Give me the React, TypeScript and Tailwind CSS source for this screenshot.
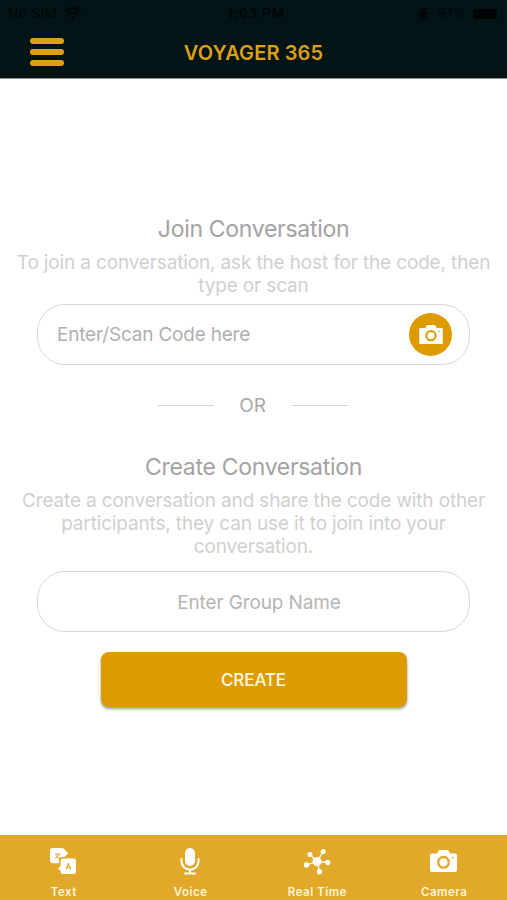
import React from 'react';

const CameraIcon: React.FC<{ className?: string; lens: string }> = ({ className, lens }) => (
  <svg viewBox="0 0 26 21" className={className}>
    <path
      fill="#fff"
      d="M1.500 3.200h5.300L8 .8Q8.400 0 9.300 0h7.400q.9 0 1.300.8l1.200 2.400h5.300A1.500 1.500 0 0 1 26 4.700v14.800a1.500 1.500 0 0 1-1.500 1.500h-23A1.500 1.500 0 0 1 0 19.500V4.700a1.500 1.500 0 0 1 1.500-1.500z"
    />
    <circle cx="13" cy="11.800" r="5.100" fill="none" stroke={lens} strokeWidth="2.300" />
    <circle cx="22" cy="7.200" r="0.9" fill={lens} />
  </svg>
);

const TranslateIcon: React.FC = () => (
  <svg viewBox="0 0 26.300 26.300" className="h-[26px] w-[26px]">
    <path fill="#fff" d="M2.500 0H12q1.500 0 2.300 1L18.500 5.500 14.500 9H11q-2 0-2 2v4.500H2.500A2.500 2.500 0 0 1 0 13V2.500A2.500 2.500 0 0 1 2.500 0z" />
    <path fill="#fff" d="M13 10.500h11a2.300 2.300 0 0 1 2.300 2.300V24a2.300 2.300 0 0 1-2.300 2.300H13a2.300 2.300 0 0 1-2.300-2.300v-1L8 21l2.700-2.500v-5.700a2.300 2.300 0 0 1 2.300-2.300z" />
    <path fill="none" stroke="#e2a829" strokeWidth="1" d="M5 6.300h5.500M7.700 5v1.300M9.500 6.500Q8.500 9.500 5.300 10.500M6 7q1 2.500 3 3.400" />
    <path fill="none" stroke="#e2a829" strokeWidth="1.200" d="M16.300 21.800l2.200-6 2.200 6M17 20h3" />
  </svg>
);

const MicIcon: React.FC = () => (
  <svg viewBox="0 0 20 27" className="h-[27px] w-5">
    <rect x="5" y="0" width="10" height="18" rx="5" fill="#fff" />
    <path
      fill="none"
      stroke="#fff"
      strokeWidth="2"
      strokeLinecap="round"
      d="M1.500 11v2.500a8.500 8.200 0 0 0 17 0V11M10 22v3.500M5 25.600h10"
    />
  </svg>
);

const HubIcon: React.FC = () => (
  <svg viewBox="0 0 28 27" className="h-[27px] w-7">
    <path stroke="#fff" strokeWidth="1.300" d="M14 13.500L7 6.500M14 13.500L20.200 3.500M14 13.500L3.500 17M14 13.500L24.500 14.500M14 13.500L16.500 23.500" />
    <g fill="#fff">
      <circle cx="14" cy="13.500" r="4.500" />
      <circle cx="7" cy="6.500" r="2.500" />
      <circle cx="20.200" cy="3.500" r="2.500" />
      <circle cx="3.500" cy="17" r="2.700" />
      <circle cx="24.700" cy="14.500" r="2.700" />
      <circle cx="16.500" cy="23.700" r="2.700" />
    </g>
  </svg>
);

const tabs = [
  { label: 'Text', icon: <TranslateIcon /> },
  { label: 'Voice', icon: <MicIcon /> },
  { label: 'Real Time', icon: <HubIcon /> },
  { label: 'Camera', icon: <CameraIcon className="h-[22px] w-[27px]" lens="#e2a829" /> },
];

const Header: React.FC = () => (
  <header className="h-[79px] shrink-0 border-b border-[#8d9294] bg-[#031417]">
    <div className="flex h-[27px] items-center justify-between pl-2 pr-[10px] text-[13px] leading-none text-[#000507]">
      <div className="flex w-40 items-center gap-[6px]">
        <span className="text-[13.500px] tracking-[0.5px]">No SIM</span>
        <svg viewBox="0 0 18 13" className="h-[13px] w-[18px]" fill="none" stroke="#000507" strokeWidth="2.400">
          <path d="M1 4.500a11.500 11.500 0 0 1 16 0M4 7.800a7.200 7.200 0 0 1 10 0" />
          <path d="M9 12.500L6.500 10a3.600 3.600 0 0 1 5 0z" fill="#000507" stroke="none" />
        </svg>
      </div>
      <span className="ml-[7px] text-[13.500px] font-semibold tracking-[0.8px]">1:03 PM</span>
      <div className="flex w-40 items-center justify-end gap-[6px]">
        <svg viewBox="0 0 16 14" className="h-[14px] w-4" fill="none" stroke="#000507" strokeWidth="1.200">
          <path d="M12 3.500A5.800 5.800 0 1 0 12.500 10M11 6.500h4.500" />
          <path d="M4.500 6.300h5V10h-5zM5.500 6V4.500a1.500 1.500 0 0 1 3 0V6" fill="#000507" />
        </svg>
        <span className="tracking-[0.5px]">97%</span>
        <span className="h-[10px] w-6 rounded-[2px] bg-[#000304]" />
      </div>
    </div>
    <div className="grid h-[50px] grid-cols-[95px_1fr_95px] items-center">
      <div className="ml-[30.400px] flex w-[33.500px] flex-col gap-[5px]">
        <span className="h-[6px] rounded-full bg-[#dda012]" />
        <span className="h-[6px] rounded-full bg-[#dda012]" />
        <span className="h-[6px] rounded-full bg-[#dda012]" />
      </div>
      <h1 className="pt-px text-center text-[20px] font-semibold leading-none tracking-[0.12px] text-[#dda012]">VOYAGER 365</h1>
    </div>
  </header>
);

export default function App() {
  return (
    <div className="flex h-[900px] w-[507px] flex-col overflow-hidden bg-white font-['Inter',sans-serif]">
      <Header />

      <main className="flex flex-1 flex-col items-center pt-[134px] text-center">
        <h2 className="text-[23px] leading-8 tracking-[-0.3px] text-[#a3a3a3]">Join Conversation</h2>
        <p className="mt-[6px] whitespace-nowrap text-[19px] leading-[23px] tracking-[-0.15px] text-[#d0d0d0]">
          To join a conversation, ask the host for the code, then
          <br />
          type or scan
        </p>
        <div className="mt-[7px] flex h-[61px] w-[433px] shrink-0 items-center justify-between rounded-[28px] border-[1.500px] border-[#d8d8d8] pl-[19px] pr-[17px]">
          <span className="pt-[2px] text-[19px] tracking-[-0.2px] text-[#b0b0b0]">Enter/Scan Code here</span>
          <span className="flex h-[43px] w-[43px] items-center justify-center rounded-full bg-[#de9b00]">
            <CameraIcon className="h-[19px] w-6" lens="#de9b00" />
          </span>
        </div>

        <div className="mr-[2px] mt-[26px] flex h-7 items-center">
          <span className="h-px w-[56px] bg-[#d4d4d4]" />
          <span className="w-[78px] pt-[2px] text-[19px] tracking-[-0.2px] text-[#a8a8a8]">OR</span>
          <span className="h-px w-[56px] bg-[#d4d4d4]" />
        </div>

        <h2 className="mt-[32px] text-[23px] leading-8 tracking-[-0.3px] text-[#a3a3a3]">Create Conversation</h2>
        <p className="mt-[6px] whitespace-nowrap text-[19px] leading-[23px] tracking-[-0.15px] text-[#d0d0d0]">
          Create a conversation and share the code with other
          <br />
          participants, they can use it to join into your
          <br />
          conversation.
        </p>
        <div className="mt-[13px] flex h-[61px] w-[433px] shrink-0 items-center justify-center rounded-[28px] border-[1.500px] border-[#d8d8d8] pl-[11px]">
          <span className="pt-[3px] text-[19px] tracking-[-0.12px] text-[#b5b5b5]">Enter Group Name</span>
        </div>
        <button className="mt-[20px] h-[55px] w-[306px] shrink-0 rounded-[8px] bg-[#de9b00] pt-[2px] text-[17px] font-medium tracking-[-0.1px] text-[#fff8e6] shadow-[0_2px_3px_rgba(0,0,0,0.4)]">
          CREATE
        </button>
      </main>

      <nav className="grid h-[65px] shrink-0 grid-cols-4 bg-[#e2a829]">
        {tabs.map((tab) => (
          <div key={tab.label} className="flex flex-col items-center">
            <div className="mt-[12px] flex h-7 items-center">{tab.icon}</div>
            <span className="mt-[10px] pl-px text-[11.500px] font-semibold leading-[14px] tracking-[0.5px] text-[#fff5dc]">
              {tab.label}
            </span>
          </div>
        ))}
      </nav>
    </div>
  );
}
